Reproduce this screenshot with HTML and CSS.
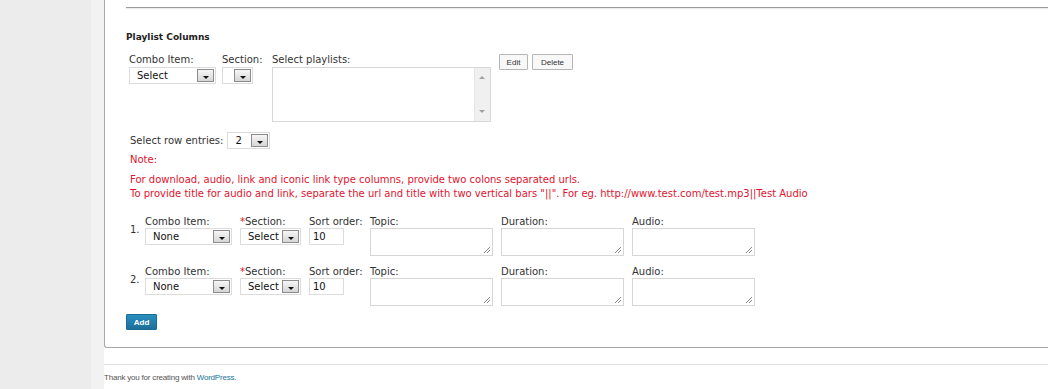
FILE: index.html
```html
<!DOCTYPE html>
<html>
<head>
<meta charset="utf-8">
<link rel="stylesheet" href="styles.css">
</head>
<body>
<div class="page">
  <div class="sidebar"></div>
  <div class="gutter"></div>
  <div class="main">
    <div class="box">
      <div class="prev-end"></div>
      <h3 class="title">Playlist Columns</h3>
      <div class="top-row">
        <div class="field tf-combo">
          <label class="lbl">Combo Item:</label>
          <div class="sel w86"><span class="val">Select</span><span class="arr"></span></div>
        </div>
        <div class="field tf-sec">
          <label class="lbl">Section:</label>
          <div class="sel w30"><span class="val"></span><span class="arr"></span></div>
        </div>
        <div class="field tf-list">
          <label class="lbl">Select playlists:</label>
          <div class="listbox">
            <div class="lb-scroll"><span class="up"></span><span class="down"></span></div>
          </div>
        </div>
        <div class="btns">
          <button class="btn b-edit">Edit</button>
          <button class="btn b-del">Delete</button>
        </div>
      </div>
      <div class="rows-line">
        <span class="lbl">Select row entries:</span>
        <div class="sel w42"><span class="val">2</span><span class="arr"></span></div>
      </div>
      <p class="note first">Note:</p>
      <p class="note">For download, audio, link and iconic link type columns, provide two colons separated urls.</p>
      <p class="note">To provide title for audio and link, separate the url and title with two vertical bars "||". For eg. http://www.test.com/test.mp3||Test Audio</p>

      <div class="entry">
        <span class="num">1.</span>
        <div class="field f-combo"><label class="lbl">Combo Item:</label><div class="sel w86"><span class="val">None</span><span class="arr"></span></div></div>
        <div class="field f-sec"><label class="lbl"><span class="req">*</span>Section:</label><div class="sel w60"><span class="val">Select</span><span class="arr"></span></div></div>
        <div class="field f-sort"><label class="lbl">Sort order:</label><div class="txt">10</div></div>
        <div class="field f-ta"><label class="lbl">Topic:</label><div class="ta"><span class="grip"></span></div></div>
        <div class="field f-ta"><label class="lbl">Duration:</label><div class="ta"><span class="grip"></span></div></div>
        <div class="field f-ta"><label class="lbl">Audio:</label><div class="ta"><span class="grip"></span></div></div>
      </div>
      <div class="entry">
        <span class="num">2.</span>
        <div class="field f-combo"><label class="lbl">Combo Item:</label><div class="sel w86"><span class="val">None</span><span class="arr"></span></div></div>
        <div class="field f-sec"><label class="lbl"><span class="req">*</span>Section:</label><div class="sel w60"><span class="val">Select</span><span class="arr"></span></div></div>
        <div class="field f-sort"><label class="lbl">Sort order:</label><div class="txt">10</div></div>
        <div class="field f-ta"><label class="lbl">Topic:</label><div class="ta"><span class="grip"></span></div></div>
        <div class="field f-ta"><label class="lbl">Duration:</label><div class="ta"><span class="grip"></span></div></div>
        <div class="field f-ta"><label class="lbl">Audio:</label><div class="ta"><span class="grip"></span></div></div>
      </div>
      <button class="add">Add</button>
    </div>
    <div class="footer">Thank you for creating with <a href="#">WordPress</a>.</div>
  </div>
</div>
</body>
</html>
```
FILE: styles.css
```css
html, body { margin: 0; padding: 0; background: #fff; }
body { font-family: "DejaVu Sans", Verdana, sans-serif; font-size: 10px; color: #333; }
.page { display: flex; height: 389px; overflow: hidden; }
.sidebar { width: 91px; background: #ececec; flex: none; }
.gutter { width: 13px; background: #f2f2f2; flex: none; }
.main { flex: 1; background: #fff; }
.box {
  border-left: 1px solid #a8a8a8;
  border-bottom: 1px solid #a8a8a8;
  border-bottom-left-radius: 3px;
  height: 348px;
  box-sizing: border-box;
  padding-left: 21px;
}
.prev-end { height: 7px; border-bottom: 1px solid #9a9a9a; box-shadow: 0 1px 1px #ececec; }
.title { margin: 23px 0 0 0; font-family: Tahoma, "DejaVu Sans", sans-serif; font-size: 9px; font-weight: bold; color: #222; line-height: 12px; }
.lbl { display: block; color: #333; line-height: 12px; white-space: nowrap; }
.top-row { display: flex; margin-top: 11px; padding-left: 3px; }
.tf-combo { width: 93px; }
.tf-sec { width: 50px; }
.tf-list { width: 227px; }
.sel {
  display: flex; align-items: center; justify-content: space-between;
  height: 17px; box-sizing: border-box;
  border: 1px solid #dcdcdc; background: #fff;
  padding: 0 1px 0 7px; color: #111;
}
.sel .val { line-height: 15px; }
.arr {
  width: 17px; height: 13px; box-sizing: border-box; flex: none;
  border: 1px solid #8c8c8c;
  background: linear-gradient(#f6f6f6, #d6d6d6);
  position: relative;
}
.arr::after {
  content: ""; position: absolute; left: 5px; top: 6px;
  border-left: 3px solid transparent; border-right: 3px solid transparent;
  border-top: 3px solid #111;
}
.w86 { width: 87px; }
.w30 { width: 31px; }
.w42 { width: 43px; }
.w60 { width: 61px; }
.top-row .sel { margin-top: 1px; }
.listbox {
  position: relative; width: 219px; height: 55px; margin-top: 1px;
  border: 1px solid #d8d8d8; box-sizing: border-box; background: #fff;
}
.lb-scroll { position: absolute; right: 0; top: 0; bottom: 0; width: 15px; background: #f0f0f0; border-left: 1px solid #e6e6e6; }
.lb-scroll .up { position: absolute; left: 4px; top: 8px; border-left: 3px solid transparent; border-right: 3px solid transparent; border-bottom: 3px solid #a0a0a0; }
.lb-scroll .down { position: absolute; left: 4px; bottom: 8px; border-left: 3px solid transparent; border-right: 3px solid transparent; border-top: 3px solid #a0a0a0; }
.btns { display: flex; gap: 4px; margin-top: 0; align-self: flex-start; }
.btn {
  font-family: "Liberation Sans", Arial, sans-serif; font-size: 8px; color: #333;
  height: 16px; padding: 0; border: 1px solid #b5b5b5; background: #f8f8f8; border-radius: 1px;
}
.b-edit { width: 29px; }
.b-del { width: 41px; }
.rows-line { display: flex; align-items: center; gap: 4px; margin-top: 10px; padding-left: 4px; }
.note { margin: 0; color: #e0132e; padding-left: 4px; line-height: 14px; }
.note.first { margin-top: 4px; margin-bottom: 6px; }
.entry { display: flex; align-items: flex-start; margin-top: 15px; padding-left: 4px; }
.entry + .entry { margin-top: 10px; }
.entry .lbl { line-height: 11px; }
.num { width: 15px; margin-top: 8px; color: #333; }
.f-combo { width: 95px; }
.f-sec { width: 69px; }
.f-sort { width: 61px; }
.f-ta { width: 131px; }
.req { color: #e0132e; }
.field .sel, .field .txt, .field .ta { margin-top: 1px; }
.txt { width: 35px; height: 17px; box-sizing: border-box; border: 1px solid #dcdcdc; padding-left: 3px; line-height: 15px; color: #111; }
.ta { position: relative; width: 123px; height: 28px; box-sizing: border-box; border: 1px solid #d6d6d6; background: #fff; }
.grip { position: absolute; right: 2px; bottom: 2px; width: 6px; height: 6px;
  background: linear-gradient(135deg, transparent 45%, #888 45%, #888 55%, transparent 55%, transparent 70%, #888 70%, #888 80%, transparent 80%); }
.add {
  display: block; margin-top: 8px; height: 16px; width: 31px; padding: 0;
  font-family: "Liberation Sans", Arial, sans-serif; font-size: 8px; font-weight: bold; color: #fff;
  background: linear-gradient(#2a8fc0, #1d6f99); border: 1px solid #1b6a92; border-radius: 1px;
}
.footer { border-top: 1px solid #e0e0e0; margin-top: 16px; padding-top: 8px; font-family: "Liberation Sans", Arial, sans-serif; font-size: 8px; color: #555; letter-spacing: -0.2px; }
.footer a { color: #21759b; text-decoration: none; }
```
